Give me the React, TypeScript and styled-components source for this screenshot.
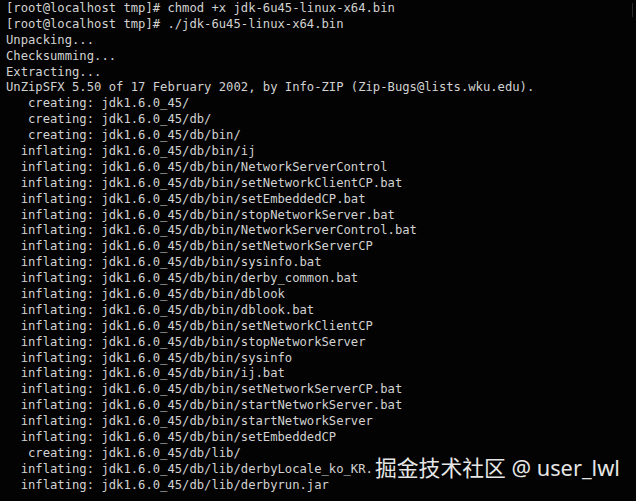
import React from "react";
import styled, { createGlobalStyle } from "styled-components";

const Global = createGlobalStyle`
  html, body { margin: 0; padding: 0; background: #000; }
  #root { width: 636px; height: 501px; }
`;

const Terminal = styled.div`
  position: relative;
  width: 636px;
  height: 501px;
  box-sizing: border-box;
  background: #030303;
  padding: 1px 0 0 6px;
  overflow: hidden;
`;

const Output = styled.div`
  display: flex;
  flex-direction: column;
  align-items: flex-start;
  font-family: "DejaVu Sans Mono", "Liberation Mono", monospace;
  font-size: 12.2px;
  line-height: 15.9px;
  color: #d2d2d2;
`;

const Line = styled.div`
  white-space: pre;
  height: 15.9px;
  width: max-content;
`;

const ScrollMark = styled.div`
  position: absolute;
  right: 3px;
  top: 3px;
  width: 1px;
  height: 14px;
  background: #2a2a2a;
`;

const Watermark = styled.div`
  position: absolute;
  left: 375px;
  top: 453px;
  font-family: "Noto Sans", "Noto Sans CJK SC", sans-serif;
  font-size: 21.8px;
  line-height: 30px;
  color: #e6e6e6;
  white-space: nowrap;
  text-shadow: 0 0 2px rgba(0, 0, 0, 0.6);
`;

const lines = [
  "[root@localhost tmp]# chmod +x jdk-6u45-linux-x64.bin",
  "[root@localhost tmp]# ./jdk-6u45-linux-x64.bin",
  "Unpacking...",
  "Checksumming...",
  "Extracting...",
  "UnZipSFX 5.50 of 17 February 2002, by Info-ZIP (Zip-Bugs@lists.wku.edu).",
  "   creating: jdk1.6.0_45/",
  "   creating: jdk1.6.0_45/db/",
  "   creating: jdk1.6.0_45/db/bin/",
  "  inflating: jdk1.6.0_45/db/bin/ij",
  "  inflating: jdk1.6.0_45/db/bin/NetworkServerControl",
  "  inflating: jdk1.6.0_45/db/bin/setNetworkClientCP.bat",
  "  inflating: jdk1.6.0_45/db/bin/setEmbeddedCP.bat",
  "  inflating: jdk1.6.0_45/db/bin/stopNetworkServer.bat",
  "  inflating: jdk1.6.0_45/db/bin/NetworkServerControl.bat",
  "  inflating: jdk1.6.0_45/db/bin/setNetworkServerCP",
  "  inflating: jdk1.6.0_45/db/bin/sysinfo.bat",
  "  inflating: jdk1.6.0_45/db/bin/derby_common.bat",
  "  inflating: jdk1.6.0_45/db/bin/dblook",
  "  inflating: jdk1.6.0_45/db/bin/dblook.bat",
  "  inflating: jdk1.6.0_45/db/bin/setNetworkClientCP",
  "  inflating: jdk1.6.0_45/db/bin/stopNetworkServer",
  "  inflating: jdk1.6.0_45/db/bin/sysinfo",
  "  inflating: jdk1.6.0_45/db/bin/ij.bat",
  "  inflating: jdk1.6.0_45/db/bin/setNetworkServerCP.bat",
  "  inflating: jdk1.6.0_45/db/bin/startNetworkServer.bat",
  "  inflating: jdk1.6.0_45/db/bin/startNetworkServer",
  "  inflating: jdk1.6.0_45/db/bin/setEmbeddedCP",
  "   creating: jdk1.6.0_45/db/lib/",
  "  inflating: jdk1.6.0_45/db/lib/derbyLocale_ko_KR.",
  "  inflating: jdk1.6.0_45/db/lib/derbyrun.jar",
];

export default function App() {
  return (
    <>
      <Global />
      <Terminal>
        <Output>
          {lines.map((l, i) => (
            <Line key={i}>{l}</Line>
          ))}
        </Output>
        <ScrollMark />
        <Watermark>掘金技术社区 @ user_lwl</Watermark>
      </Terminal>
    </>
  );
}
